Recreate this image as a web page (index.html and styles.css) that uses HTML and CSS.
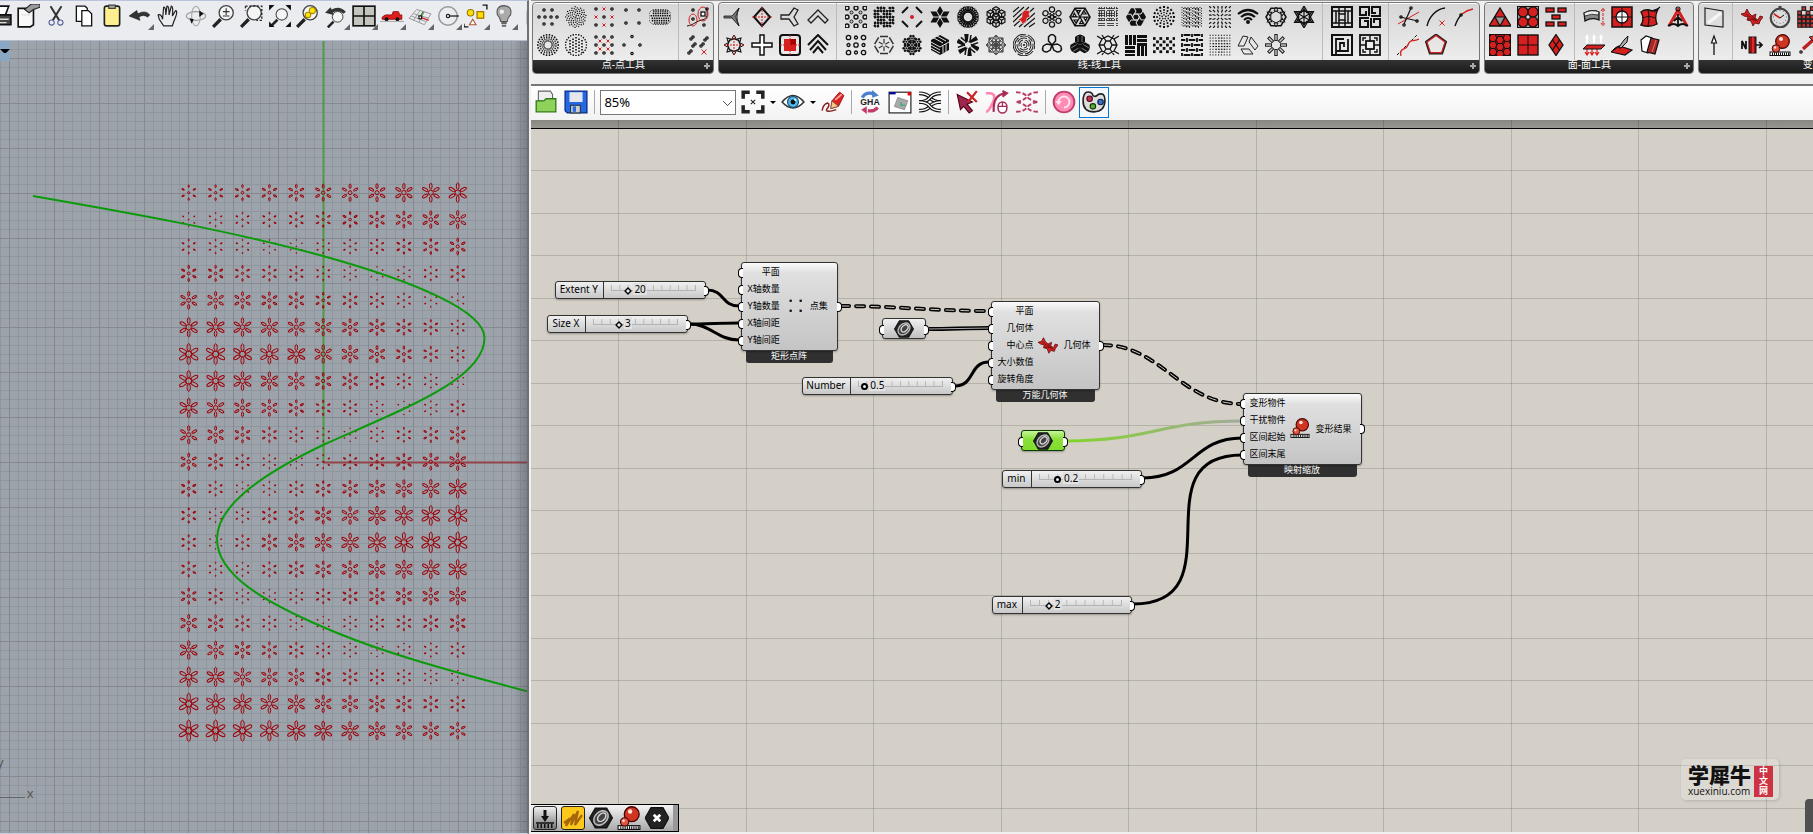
FILE: index.html
```html
<!DOCTYPE html>
<html lang="zh-CN">
  <head>
    <meta charset="UTF-8">
    <meta name="viewport" content="width=device-width, initial-scale=1.0">
    <title>Grasshopper</title>
    <link rel="stylesheet" href="styles.css">
  </head>
  <body>
    <div class="app">
      <section class="rhino">
        <div class="rhino-tools" data-icons="print props cut copy paste undo* pan orbit zoom zoom-window zoom-extents zoom-selected undo-view* four-view* car* cplane* circle-tool* shapes* bulb* box"></div>
        <div class="viewport">
          <button class="view-menu" aria-label="View menu"></button>
          <svg class="scene" id="scene" aria-hidden="true">
            <g id="grid"></g>
            <path class="axis-y" d="M323.500 0V421"/>
            <path class="axis-x" d="M323 421.500H530"/>
            <g id="flowers"></g>
            <path class="curve" id="curve" d="M33 155C130 172 227 189 323 215C420 242 484.500 271 484.500 297C484.500 339 400 369 323 404C250 439 217 469 217 498C217 534 265 561 323 586C380 611 450 630 530 651"/>
            <path class="ucs" d="M0 756.500H25"/>
            <text class="ucs-label" x="27" y="757">x</text>
            <text class="ucs-label" x="-3" y="726">y</text>
          </svg>
        </div>
      </section>

      <section class="gh">
        <div class="ribbon">
          <div class="group">
            <div class="panels">
              <div class="cells" data-icons="stagger sunflower grid-red corners pill rings rings-even cross-red diamond-pts"></div>
              <div class="cells" data-icons="curve-pts pair-pts"></div>
            </div>
            <h2>点-点工具</h2>
          </div>
          <div class="group">
            <div class="panels">
              <div class="cells" data-icons="tri-arrow diamond tri-y chevron hex-sun plus square-red chevrons"></div>
              <div class="cells" data-icons="circles noise dashes-dot star6 woven hex-cluster splash hex-flower hex-tri weave swirl dots-ring rain rays wifi hex-star star-pattern circles-mix hex-spokes dots-hex iso blades mandala maze-ring petals petals-fill lattice basket diag-dots woven-dots dot-grid quads burst"></div>
              <div class="cells" data-icons="window-a meander meander-b window-b"></div>
              <div class="cells" data-icons="lines-pt arc-x arc-pt curve-cross pentagon"></div>
            </div>
            <h2>线-线工具</h2>
          </div>
          <div class="group">
            <div class="panels">
              <div class="cells" data-icons="tri-red circles-red bricks hexes-red squares-red diamonds-red"></div>
              <div class="cells" data-icons="cylinder target patch compass updown plane slabs"></div>
            </div>
            <h2>面-面工具</h2>
          </div>
          <div class="group wide">
            <div class="panels">
              <div class="cells" data-icons="quad arrow-up"></div>
              <div class="cells" data-icons="bird clock checker north balls arrow-red"></div>
            </div>
            <h2>变-变动工具</h2>
          </div>
        </div>

        <div class="toolbar">
          <button class="tb" aria-label="Open" data-icon="open"></button>
          <button class="tb" aria-label="Save" data-icon="save"></button>
          <span class="sep"></span>
          <select class="zoom" aria-label="Zoom"><option>85%</option></select>
          <button class="tb" aria-label="Zoom extents" data-icon="fit"></button>
          <span class="drop"></span>
          <button class="tb" aria-label="Preview" data-icon="eye"></button>
          <span class="drop"></span>
          <button class="tb" aria-label="Sketch" data-icon="crayon"></button>
          <span class="sep"></span>
          <button class="tb" aria-label="GHA" data-icon="gha"></button>
          <button class="tb" aria-label="Window" data-icon="window"></button>
          <button class="tb" aria-label="Wires" data-icon="wires"></button>
          <span class="sep"></span>
          <button class="tb" aria-label="Disable pick" data-icon="pick"></button>
          <button class="tb" aria-label="Mouse wire" data-icon="mouse"></button>
          <button class="tb" aria-label="Dashed wires" data-icon="wires-dash"></button>
          <span class="sep"></span>
          <button class="tb" aria-label="Recompute" data-icon="refresh"></button>
          <button class="tb active" aria-label="Palette" data-icon="palette"></button>
        </div>

        <div class="canvas">
          <svg class="wires" id="wires" aria-hidden="true">
            <defs>
              <linearGradient id="green-wire" gradientUnits="userSpaceOnUse" x1="536" y1="0" x2="710" y2="0">
                <stop offset="0" stop-color="#82d42c"/>
                <stop offset="1" stop-color="#a3aa9a"/>
              </linearGradient>
            </defs>
            <g id="canvas-grid"></g>
            <path class="wire" d="M176 170C194 170 190 186 208 186"/>
            <path class="wire" d="M158 204C176 204 190 203 208 203"/>
            <path class="wire" d="M158 204C180 204 186 220 208 220"/>
            <path class="wire" d="M424 266C444 266 438 242 458 242"/>
            <path class="wire" d="M612 358C662 358 662 318 711 318"/>
            <path class="wire" d="M602 484C708 484 606 335 711 335"/>
            <path class="wire green" d="M536 321C618 321 630 301 711 301"/>
            <path class="wire list" d="M398 209C418 209 438 208 458 208"/>
            <path class="wire list-core" d="M398 209C418 209 438 208 458 208"/>
            <path class="wire tree" d="M310 186C360 186 408 191 458 191"/>
            <path class="wire tree-core" d="M310 186C360 186 408 191 458 191"/>
            <path class="wire tree" d="M572 225C630 225 650 284 711 284"/>
            <path class="wire tree-core" d="M572 225C630 225 650 284 711 284"/>
          </svg>

          <div class="slider extent-y">
            <label for="extent-y">Extent Y</label>
            <div class="track" style="--at: 0.2"><input id="extent-y" type="range" min="0" max="100" value="20"><output>20</output></div>
          </div>
          <div class="slider size-x">
            <label for="size-x">Size X</label>
            <div class="track" style="--at: 0.3"><input id="size-x" type="range" min="0" max="10" value="3"><output>3</output></div>
          </div>
          <div class="slider number float">
            <label for="number">Number</label>
            <div class="track" style="--at: 0.07"><input id="number" type="range" min="0" max="7" step="0.1" value="0.5"><output>0.5</output></div>
          </div>
          <div class="slider min float">
            <label for="min">min</label>
            <div class="track" style="--at: 0.2"><input id="min" type="range" min="0" max="1" step="0.1" value="0.2"><output>0.2</output></div>
          </div>
          <div class="slider max">
            <label for="max">max</label>
            <div class="track" style="--at: 0.2"><input id="max" type="range" min="0" max="10" value="2"><output>2</output></div>
          </div>

          <div class="param geo"><span data-icon="nut"></span></div>
          <div class="param crv selected"><span data-icon="nut"></span></div>

          <div class="node grid-node">
            <div class="node-body">
              <ul class="inputs"><li>平面</li><li>X轴数量</li><li>Y轴数量</li><li>X轴间距</li><li>Y轴间距</li></ul>
              <span class="node-icon" data-icon="corners-sq"></span>
              <ul class="outputs"><li>点集</li></ul>
            </div>
            <div class="node-name">矩形点阵</div>
          </div>
          <div class="node geo-node">
            <div class="node-body">
              <ul class="inputs"><li>平面</li><li>几何体</li><li>中心点</li><li>大小数值</li><li>旋转角度</li></ul>
              <span class="node-icon" data-icon="bird"></span>
              <ul class="outputs"><li>几何体</li></ul>
            </div>
            <div class="node-name">万能几何体</div>
          </div>
          <div class="node morph-node">
            <div class="node-body">
              <ul class="inputs"><li>变形物件</li><li>干扰物件</li><li>区间起始</li><li>区间末尾</li></ul>
              <span class="node-icon" data-icon="balls"></span>
              <ul class="outputs"><li>变形结果</li></ul>
            </div>
            <div class="node-name">映射缩放</div>
          </div>

          <div class="recent">
            <button class="framed" aria-label="Dock" data-icon="dock"></button>
            <button class="framed yellow" aria-label="Scribble" data-icon="scribble"></button>
            <button aria-label="Curve" data-icon="nut"></button>
            <button aria-label="Scale" data-icon="balls"></button>
            <button aria-label="Close" data-icon="close"></button>
          </div>

          <a class="brand" href="#">
            <span class="brand-name"><b>学犀牛</b><span>xuexiniu.com</span></span>
            <span class="brand-tag">中<br>文<br>网</span>
          </a>
          <span class="side-tab"></span>
        </div>
      </section>
    </div>
    <script src="icons.js"></script>
    <script src="app.js"></script>
  </body>
</html>
```
FILE: styles.css
```css
* {
  box-sizing: border-box;
  margin: 0;
  padding: 0;
}

body {
  font-family: "Noto Sans", "Noto Sans CJK SC", sans-serif;
  background-color: #f0f0f0;
  overflow: hidden;
}

button {
  border: none;
  background: none;
  font: inherit;
}

svg {
  display: block;
}

.app {
  display: flex;
  height: 100vh;
}

/* Rhino side */
.rhino {
  flex: 0 0 29.2%;
  display: flex;
  flex-direction: column;
  min-width: 0;
  border-top: 1px solid #b9c3dc;
  border-right: 2px solid #6f7073;
  border-bottom: 1px solid #c6cedd;
  background-color: #ebecf0;
  overflow: hidden;
}

.rhino-tools {
  flex: 0 0 40px;
  display: flex;
  padding-top: 1px;
  margin-left: -14px;
  border-bottom: 1px solid #b4bccb;
}

.rhino-tools button {
  flex: 0 0 28px;
  height: 28px;
  padding: 2px;
  position: relative;
}

.rhino-tools svg {
  width: 24px;
  height: 24px;
}

.rhino-tools .more::after {
  content: "";
  position: absolute;
  right: 0;
  bottom: 0;
  border-left: 6px solid transparent;
  border-bottom: 6px solid #666;
}

.viewport {
  flex: 1;
  position: relative;
  background-color: #9da3aa;
  overflow: hidden;
}

.viewport::after {
  content: "";
  position: absolute;
  top: 0;
  right: 0;
  bottom: 0;
  width: 14px;
  background: linear-gradient(to right, transparent, rgba(60, 65, 75, 0.35));
}

.scene {
  width: 100%;
  height: 100%;
}

.view-menu {
  position: absolute;
  left: 0;
  top: 0;
  width: 10px;
  height: 20px;
  background-color: #8ca7c3;
}

.view-menu::after {
  content: "";
  display: block;
  border: 4px solid transparent;
  border-top-color: #000;
  border-bottom: none;
}

.minor {
  stroke: #90969e;
}

.major {
  stroke: #858992;
}

.axis-y {
  stroke: #4d9a4d;
  stroke-width: 2;
}

.axis-x {
  stroke: #96444a;
  stroke-width: 2;
}

.curve {
  fill: none;
  stroke: #0b9a0b;
  stroke-width: 2;
}

#flowers {
  fill: none;
  stroke: #9c0008;
  stroke-width: 1;
}

.ucs {
  stroke: #666;
}

.ucs-label {
  font: 13px "Liberation Sans", sans-serif;
  fill: #555;
}

/* Grasshopper side */
.gh {
  flex: 1;
  min-width: 0;
  display: flex;
  flex-direction: column;
  padding: 0 0 2px 2px;
  overflow: hidden;
}

.ribbon {
  display: flex;
  gap: 4px;
  padding: 1px 0 0 1px;
  border-top: 1px solid #999;
  height: 74px;
}

.group {
  flex: none;
  border: 1px solid #777;
  border-radius: 4px;
  background: linear-gradient(#d6d6d6, #ededed 58px);
  box-shadow: inset 0 1px #fff;
  overflow: hidden;
}

.wide {
  width: 262px;
}

.panels {
  display: flex;
  height: 57px;
  padding: 0 1px;
}

.cells {
  display: grid;
  grid-auto-columns: 28px;
  grid-template-rows: 28px 28px;
}

.cells + .cells {
  margin-left: 4px;
  padding-left: 5px;
  border-left: 1px solid #bbb;
}

.cells button {
  padding: 3px;
}

.cells svg {
  width: 22px;
  height: 22px;
}

.group h2 {
  height: 15px;
  position: relative;
  font-size: 10px;
  line-height: 8px;
  font-weight: 400;
  text-align: center;
  color: #fff;
  background: linear-gradient(#333, #161616);
}

.group h2::after {
  content: "";
  position: absolute;
  right: 3px;
  top: 3px;
  width: 6px;
  height: 6px;
  background: linear-gradient(#aaa, #aaa) 2px 0 / 2px 6px no-repeat, linear-gradient(#aaa, #aaa) 0 2px / 6px 2px no-repeat;
}

.toolbar {
  display: flex;
  align-items: center;
  height: 36px;
  margin-top: 10px;
  padding-bottom: 2px;
  border-top: 2px solid #777;
  background: linear-gradient(#fff, #f2f2f2);
}

.tb {
  flex: none;
  width: 30px;
  height: 31px;
  padding: 3px;
}

.tb svg {
  width: 24px;
  height: 24px;
}

.active {
  border: 1px solid #0078d7;
  padding: 2px;
  background-color: #f4f8fc;
}

.sep {
  width: 1px;
  height: 24px;
  margin: 0 3px;
  background-color: #aaa;
}

.zoom {
  width: 136px;
  height: 25px;
  margin: 0 2px;
  padding-left: 3px;
  font-family: inherit;
  font-size: 13px;
  color: #000;
  border: 1px solid #777;
  border-radius: 0;
  appearance: none;
  background-color: #fff;
  background-image: linear-gradient(-45deg, transparent 42%, #555 42% 58%, transparent 58%), linear-gradient(45deg, transparent 42%, #555 42% 58%, transparent 58%);
  background-position: 126px 10px, 122px 10px;
  background-size: 5px 5px;
  background-repeat: no-repeat;
}

.drop {
  width: 6px;
  margin: 0 2px;
  border: 3px solid transparent;
  border-top-color: #000;
  border-bottom: none;
}

/* Canvas */
.canvas {
  flex: 1;
  position: relative;
  background: linear-gradient(#888680, #999791 8px, #000 8px, #000 9px, #d4d0c8 9px);
  overflow: hidden;
}

.wires {
  width: 100%;
  height: 100%;
}

.canvas-line {
  stroke: rgba(0, 10, 0, 0.15);
}

.wire {
  fill: none;
  stroke: #000;
  stroke-width: 3;
  stroke-linecap: round;
}

.green {
  stroke: url(#green-wire);
}

.list {
  stroke-width: 4;
  stroke-linecap: butt;
}

.list-core {
  stroke: #aaa;
  stroke-width: 1;
}

.tree {
  stroke-width: 4;
  stroke-dasharray: 8 7;
}

.tree-core {
  stroke: #d4d0c8;
  stroke-width: 1;
  stroke-dasharray: 8 7;
}

.slider,
.param,
.node,
.recent,
.brand,
.side-tab {
  position: absolute;
}

.slider {
  display: flex;
  height: 18px;
  font-size: 10px;
  line-height: 14px;
  border: 1px solid #333;
  border-radius: 3px;
  background: linear-gradient(#f0f0f0, #c8c8c8);
  box-shadow: 0 1px 2px rgba(0, 0, 0, 0.3);
}

.slider label {
  flex: none;
  padding-right: 2px;
  text-align: center;
  border-right: 1px solid #333;
}

.track {
  flex: 1;
  position: relative;
}

.track::before {
  content: "";
  position: absolute;
  left: 7px;
  right: 9px;
  top: 3px;
  height: 5px;
  border-right: 1px solid #b4b4b4;
  border-bottom: 1px solid #b4b4b4;
  background: linear-gradient(to right, #b4b4b4 1px, transparent 1px) 0 0 / 10% 5px;
}

.track input {
  position: absolute;
  left: 3px;
  top: 4px;
  width: calc(100% - 8px);
  height: 9px;
  appearance: none;
  background: none;
}

.track input::-webkit-slider-thumb {
  appearance: none;
  width: 8px;
  height: 8px;
  background: #eee;
  border: 2px solid #000;
  transform: rotate(45deg) scale(0.7);
}

.float input::-webkit-slider-thumb {
  border-radius: 50%;
  transform: none;
  width: 7px;
  height: 7px;
}

.track output {
  position: absolute;
  left: calc(12px + (100% - 16px) * var(--at));
  top: 1px;
  height: 12px;
  padding: 0 1px;
  line-height: 12px;
  background-color: #e2e2e2;
}

.extent-y { left: 24px; top: 161px; width: 151px; }
.extent-y label { width: 48px; }
.size-x { left: 16px; top: 195px; width: 141px; }
.size-x label { width: 38px; }
.number { left: 271px; top: 257px; width: 151px; }
.number label { width: 48px; }
.min { left: 471px; top: 350px; width: 140px; }
.min label { width: 29px; }
.max { left: 461px; top: 476px; width: 140px; }
.max label { width: 30px; }

/* connection grips */
.slider::after,
.param::before,
.param::after,
.inputs li::before,
.outputs li::after {
  content: "";
  position: absolute;
  top: calc(50% - 4px);
  width: 4px;
  height: 8px;
  background-color: #fff;
  border: 1px solid #000;
}

.slider::after,
.param::after,
.outputs li::after {
  right: -4px;
  border-width: 1px 1px 1px 0;
  border-radius: 0 4px 4px 0;
}

.param::before,
.inputs li::before {
  left: -4px;
  border-width: 1px 0 1px 1px;
  border-radius: 4px 0 0 4px;
}

.param {
  display: flex;
  justify-content: center;
  width: 44px;
  height: 21px;
  border: 1px solid #333;
  border-radius: 3px;
  background: linear-gradient(#f0f0f0, #c0c0c0);
  box-shadow: 0 1px 2px rgba(0, 0, 0, 0.3);
}

.param svg {
  width: 20px;
  height: 20px;
}

.geo { left: 351px; top: 198px; }
.crv { left: 490px; top: 310px; }

.selected {
  border-color: #0b3a05;
  background: linear-gradient(#c8f59c, #8ae03a 8px, #80dc2c);
}

.node {
  font-size: 9px;
}

.node-body {
  display: flex;
  align-items: center;
  position: relative;
  padding-bottom: 2px;
  border: 1px solid #333;
  border-radius: 3px;
  background: linear-gradient(#fbfbfb, #e0e0e0 10px, #c4c4c4);
  box-shadow: 0 1px 2px rgba(0, 0, 0, 0.3);
}

.node ul {
  list-style: none;
}

.node li {
  position: relative;
  line-height: 17px;
  text-align: right;
  white-space: nowrap;
}

.inputs {
  padding-left: 5px;
}

.inputs li::before {
  left: -9px;
}

.outputs {
  flex: 1;
  padding-right: 10px;
}

.outputs li::after {
  right: -14px;
}

.node-icon {
  margin: 0 5px;
}

.node-icon svg {
  width: 20px;
  height: 20px;
}

.node-name {
  height: 12px;
  margin: 0 5px;
  padding-right: 2px;
  line-height: 10px;
  text-align: center;
  color: #fff;
  background-color: #303030;
  border-radius: 0 0 3px 3px;
}

.grid-node { left: 210px; top: 142px; width: 97px; }
.geo-node { left: 460px; top: 181px; width: 109px; }
.morph-node { left: 712px; top: 273px; width: 119px; }

.recent {
  left: 0;
  bottom: 0;
  display: flex;
  gap: 4px;
  height: 28px;
  padding: 1px 9px 1px 2px;
  border: 1px solid #000;
  border-left: none;
  background: linear-gradient(to left, #999 5px, transparent 5px), linear-gradient(#f4f4f4, #a8a8a8);
}

.recent button,
.recent svg {
  width: 24px;
  height: 24px;
}

.recent .framed {
  border: 1px solid #222;
  border-radius: 3px;
  background: linear-gradient(#f0f0f0, #777);
}

.recent .framed svg {
  width: 22px;
  height: 22px;
}

.recent .yellow {
  background: #fcc81c;
}

.brand {
  display: flex;
  gap: 3px;
  right: 34px;
  bottom: 32px;
  padding: 4px 6px 3px 7px;
  border-radius: 5px;
  color: #111;
  text-decoration: none;
  background-color: rgba(255, 255, 255, 0.2);
  box-shadow: 1px 1px 3px rgba(0, 0, 0, 0.15);
}

.brand-name {
  display: flex;
  flex-direction: column;
  font: 10px/12px "Open Sans", sans-serif;
}

.brand-name b {
  font: 900 21px/22px "Noto Sans CJK SC", sans-serif;
}

.brand-tag {
  align-self: flex-start;
  width: 19px;
  margin-top: 3px;
  padding-bottom: 1px;
  font-size: 9px;
  font-weight: 700;
  line-height: 10px;
  text-align: center;
  color: #fff;
  background-color: #ce3343;
}

.side-tab {
  right: 0;
  bottom: 0;
  width: 8px;
  height: 33px;
  border-radius: 4px 0 0 0;
  background-color: #505050;
}
```
FILE: icons.js
```js
// All icons are drawn around 0,0 in a 22 x 22 box
const RED = '#d62020';

const rot = (n, s, start = 0) => Array.from({ length: n }, (_, i) => `<g transform="rotate(${start + i * 360 / n})">${s}</g>`).join('');
const at = (x, y, s) => `<g transform="translate(${x} ${y})">${s}</g>`;
const line = (d, w = 1, c = '#111', more = '') => `<path d="${d}" fill="none" stroke="${c}" stroke-width="${w}" ${more}/>`;
const fill = (d, c = '#111', s = 'none', w = 1) => `<path d="${d}" fill="${c}" stroke="${s}" stroke-width="${w}"/>`;
const dot = (x, y, r = 1, c = '#111') => `<circle cx="${x}" cy="${y}" r="${r}" fill="${c}"/>`;
const ring = (x, y, r = 1, w = 1, c = '#111', f = 'none') => `<circle cx="${x}" cy="${y}" r="${r}" fill="${f}" stroke="${c}" stroke-width="${w}"/>`;
const ex = (x, y, r = 1.5, c = RED) => line(`M${x - r} ${y - r}L${x + r} ${y + r}M${x + r} ${y - r}L${x - r} ${y + r}`, 1, c);
const rect = (x, y, w, h, c = '#111', s = 'none', sw = 1) => `<rect x="${x}" y="${y}" width="${w}" height="${h}" fill="${c}" stroke="${s}" stroke-width="${sw}"/>`;
const poly = (n, r, start = -90) => 'M' + Array.from({ length: n }, (_, i) => {
  const a = (start + i * 360 / n) * Math.PI / 180;
  return (r * Math.cos(a)).toFixed(2) + ' ' + (r * Math.sin(a)).toFixed(2);
}).join('L') + 'Z';
const cells = (step, half, fn) => {
  let s = '';
  for (let y = -half; y <= half; y += step) for (let x = -half; x <= half; x += step) s += fn(x, y, Math.round((x + half) / step), Math.round((y + half) / step));
  return s;
};
const sq = (x, y) => ring(x, y, 1.2, 1.2);
const hexSpots = r => [[0, 0]].concat(Array.from({ length: 6 }, (_, i) => [r * Math.cos(i * Math.PI / 3 + Math.PI / 6), r * Math.sin(i * Math.PI / 3 + Math.PI / 6)]));
const cross = (r = 10) => line(`M${-r} 0H${r}M0 ${-r}V${r}`, 1, RED, 'stroke-dasharray="2 1"');
const lens = line('M-3 3L-10 10', 3, '#222') + ring(2, -3, 6.5, 1.2, '#444', '#f4f4f4');

function sunflower() {
  let s = '';
  for (let i = 0; i < 75; i++) {
    const r = 1.22 * Math.sqrt(i), a = i * 2.4;
    s += dot((r * Math.cos(a)).toFixed(1), (r * Math.sin(a)).toFixed(1), 0.7);
  }
  return s;
}

const ICONS = {
  stagger: [[-4, -7], [4, -7], [-9, 0], [-3, 0], [3, 0], [9, 0], [-4, 7], [4, 7]].map(p => sq(...p)).join(''),
  sunflower: sunflower(),
  'grid-red': cells(8, 8, (x, y, i, j) => (i + j) % 2 ? ex(x, y) : sq(x, y)),
  corners: [[-6, -7], [7, -7], [-6, 6], [7, 6]].map(p => sq(...p)).join(''),
  'corners-sq': [[-5, -6], [6, -6], [-5, 5], [6, 5]].map(p => rect(p[0] - 1, p[1] - 1, 2.5, 2.5)).join(''),
  pill: [-6, -3.6, -1.2, 1.2, 3.6, 6].map((y, j) => line(`M${-10 + Math.abs(y) * .5 + j % 2} ${y}H${11 - Math.abs(y) * .5}`, 1.6, '#111', 'stroke-dasharray="1.5 .8"')).join('') + `<rect x="-11" y="-7.5" width="22" height="15" rx="6" fill="none" stroke="#222" stroke-width=".8" stroke-dasharray="1.5 1"/>`,
  rings: rot(22, dot(10.2, 0, .9)) + rot(20, dot(8, 0, .8), 8) + rot(18, dot(6.1, 0, .7)) + rot(16, ring(4.2, 0, .5, .7), 8),
  'rings-even': rot(24, dot(10.5, 0, .8)) + [-6, -3, 0, 3, 6].map(x => line(`M${x} ${-8 + Math.abs(x) * .5}V8`, 1.6, '#111', 'stroke-dasharray="1.5 1.5"')).join(''),
  'cross-red': cells(8, 8, (x, y) => sq(x, y)) + ex(-4, -4) + ex(4, -4) + ex(-4, 4) + ex(4, 4),
  'diamond-pts': sq(0, -8.5) + sq(-8, 0) + sq(8, 0) + sq(0, 8.5),
  'curve-pts': line('M-11 9C-4 8-2 4 4 3S10-4 8-9') + `<ellipse cx="-5" cy="3" rx="4" ry="6" fill="none" stroke="${RED}"/><ellipse cx="5" cy="-3" rx="5" ry="7" fill="none" stroke="${RED}"/>` + sq(-5, -7) + sq(-5, 2) + sq(9, -8) + sq(6, 8) + rect(3, -5, 4, 4, '#fff', '#111', 1.3),
  'pair-pts': [[-6, -7], [-4, 0], [8, -6], [4, 0], [-8, 7]].map(p => sq(p[0] + 1, p[1] - 1) + sq(p[0] - 1, p[1] + 1)).join('') + ex(6, 7, 2.5),

  'tri-arrow': fill('M-10-1H-2L5-9L2-1V1L5 9L-2 1H-10Z', '#777', '#111', .8) + line('M5-9Q1 0 5 9', .8),
  diamond: fill('M0-9L8 0L0 9L-8 0Z', 'none', '#111', 2) + cross(),
  'tri-y': fill('M-9-2H-1L4-9L8-7L4 0L8 7L4 9L-1 2H-9Z', 'none', '#222', 1.3),
  chevron: fill('M0-7L10 3L7 6L0-1L-7 6L-10 3Z', 'none', '#222', 1.3),
  'hex-sun': line(poly(8, 6.5), 1.5) + rot(8, line('M-2-6.5L0-10L2-6.5', 1)) + cross(),
  plus: fill('M-2-10H2V-2H10V2H2V10H-2V2H-10V-2H-2Z', '#fff', '#111', 1.5),
  'square-red': `<rect x="-10" y="-10" width="20" height="20" rx="3" fill="none" stroke="#111" stroke-width="2"/>` + rect(-6, -6, 12, 12, RED) + rect(0, -6, 6, 6, '#a00') + cross(),
  chevrons: line('M-10 0L0-10L10 0M-8 5L0-4L8 5M-5 8L0 2L5 8', 2),
  circles: cells(9, 9, (x, y) => ring(x, y, 2, 1.4)) + ring(-4.5, -4.5, 1.5) + ring(4.5, -4.5, 1.5) + ring(-4.5, 4.5, 1.5) + ring(4.5, 4.5, 1.5),
  noise: cells(3, 9, (x, y, i, j) => (i * 5 + j * 3 + i * j) % 4 ? `<g transform="translate(${x} ${y}) rotate(${(i * 37 + j * 53) % 90})">${rect(-1.4, -1.1, 2.8, 2.2)}</g>` : ''),
  'dashes-dot': rot(4, line('M-10-4L-4-10', 2)) + dot(0, 0, 2, RED),
  star6: rot(6, fill('M0-1L-3-6L0-11L3-6Z')),
  woven: rot(24, line('M5-1L11 1M5 1L11-1', 1)) + ring(0, 0, 5, 1.5) + ring(0, 0, 8, 1),
  'hex-cluster': hexSpots(6.5).map(p => at(p[0], p[1], line(poly(6, 3.8), 1.2) + line('M0 0V3.500M0 0L3-2M0 0L-3-2', 1.2))).join(''),
  splash: line('M-11-5L-5-10M-11 0L0-10M-11 5L5-10M-10 9L10-9M-5 10L11-4M0 10L11 1M5 10L11 6', 1.2) + fill('M1-7L6-6L5-3L6 0L3 1L2 5L-2 7L-3 4L-6 3L-2 0L-2-4Z', RED, '#ddd', .6),
  'hex-flower': rot(6, ring(0, -7.5, 2.6, 1.2) + line('M-2-4L0-1.500L2-4', 1)) + ring(0, 0, 2, 1),
  'hex-tri': line(poly(6, 10, 0), 1.5) + rot(6, line('M0 0L5-8.500M2-3L6-3L4-6Z', 1.2)),
  weave: [-7.5, -2.5, 2.5, 7.5].map(v => line(`M-10 ${v - 1}H10M-10 ${v + 1}H10`, .8, '#222', 'stroke-dasharray="7 2"') + line(`M${v - 1}-10V10M${v + 1}-10V10`, .8, '#222', 'stroke-dasharray="2 2 6"')).join(''),
  swirl: fill(poly(6, 10, 0)) + rot(6, line('M-1-3L5-3L8-8', 1, '#ddd')) + line(poly(6, 3.5, 0), 1, '#ddd'),
  'dots-ring': rot(16, rect(-1, -11, 2, 2)) + rot(12, dot(0, -7, 1)) + rot(10, dot(0, -4.5, .8)) + rot(5, dot(0, -2, .8)),
  rain: [-10, -7, -4, -1, 2, 5, 8].map((x, i) => line(`M${x}-10V10M${x + 1.5}-9V11`, .9, '#111', `stroke-dasharray="${1 + i % 3} 1.500"`)).join(''),
  rays: cells(4, 10, (x, y) => x || y ? `<g transform="translate(${x} ${y}) rotate(${Math.atan2(y, x) * 57.3})">${rect(-1.6, -.6, 3.2, 1.2)}</g>` : ''),
  wifi: line('M-10-3Q0-11 10-3', 2.2) + line('M-7 0Q0-6 7 0', 2.2) + line('M-4 3Q0-1 4 3', 2.2) + dot(0, 5, 2),
  'hex-star': line(poly(6, 10, 0), 1.5) + line(poly(6, 6)) + rot(6, fill('M-2-6L0-10L2-6Z', '#ddd', '#111')),
  'star-pattern': line(poly(3, 11), 1.2) + line(poly(3, 11, 90), 1.2) + rot(6, line('M0 0V-10M-3-4L0-8L3-4', 1.2)),
  'circles-mix': cells(7.5, 7.5, (x, y, i, j) => ring(x, y, (i + j) % 2 ? 1.5 : 2.2, 1.3)),
  'hex-spokes': rot(6, line('M-4-8.500H4', 1.5, '#333') + line('M0-1.500V-6', 1.2, '#333')),
  'dots-hex': hexSpots(6.5).map(p => at(p[0], p[1], rot(6, dot(2.7, 0, 1.3)) + dot(0, 0, 1))).join(''),
  iso: fill('M9-5V5L0 10L-9 5V-5L0-10Z') + line('M-9-3L0 2L9-3M-9 0L0 5M-9 3L0 8M-6-7L3-2M-3-9L6-4M3 1V8M6-1V7', 1, '#ddd'),
  blades: rot(6, fill('M0-3L8-9L10-5L3-2Z')) + rot(6, line('M2-4L3-10', 1.5)),
  mandala: ring(0, 0, 4, .9, '#444') + rot(8, ring(0, -5, 3.5, .9, '#444') + line('M0 0V-10M-2-8L0-10L2-8', .9, '#444')),
  'maze-ring': [3, 5, 7, 9, 10.8].map((r, i) => `<circle r="${r}" fill="none" stroke="#222" stroke-width="1" stroke-dasharray="${r * 1.6} 2" transform="rotate(${i * 47})"/>`).join('') + dot(0, 0, 1),
  petals: rot(3, fill('M0 0L3.500-4V-8Q0-13-3.500-8V-4Z', 'none', '#111', 1.5)),
  'petals-fill': rot(3, fill('M0 0L5-3V-8Q0-13-5-8V-3Z') + line('M-2-9V-3M2-9V-3', .6, '#bbb')),
  lattice: line('M-11-9L-6-6L-9 0L-6 6L-11 9M11-9L6-6L9 0L6 6L11 9M-6-6L0-9L6-6M-6 6L0 9L6 6M-4 0L-2-4H2L4 0L2 4H-2ZM-9 0H-4M4 0H9M-2-4L-6-10M2-4L6-10M-2 4L-6 10M2 4L6 10', 1.3),
  basket: [[-11, -10, 0], [1, -10, 1], [-11, 1, 1], [1, 1, 0]].map(p => [0, 4, 8].map(k => p[2] ? rect(p[0], p[1] + k, 10, 3) : rect(p[0] + k, p[1], 3, 10)).join('')).join(''),
  'diag-dots': cells(3.3, 9.9, (x, y, i, j) => (i + j) % 2 && Math.abs(y) < 8 ? rect(x - 1.3, y - 1.3, 2.8, 2.8) : ''),
  'woven-dots': cells(5, 10, (x, y, i, j) => (i + j) % 2 ? line(`M${x - 2.5} ${y}H${x + 2.5}`, 2.2, '#111', 'stroke-linecap="round"') : line(`M${x} ${y - 2}V${y + 2}`, 1.8)),
  'dot-grid': cells(2.8, 9.8, (x, y) => rect(x - .5, y - .5, Math.abs(x) + Math.abs(y) < 9 ? 1.6 : 1, 1.2)),
  quads: fill('M-10 1L-5-9L0-8L-4 1Z', 'none', '#222') + fill('M3-8L10 1L7 5L1-3Z', 'none', '#222') + fill('M-7 4H1L5 9H-4Z', 'none', '#222'),
  burst: rot(8, rect(-1.2, -10.5, 2.4, 6, '#ccc', '#222', 1)),
  'window-a': rect(-10, -10, 20, 20, 'none', '#111', 2) + rect(-6, -6, 12, 12, 'none', '#111', 1.5) + rect(-3, -3, 6, 6, 'none', '#111', 1.5) + line('M-10-6H-6M-10 6H-6M6-6H10M6 6H10M-3-10V-3M3-10V-3M-3 3V10M3 3V10', 1.5),
  meander: rot(4, line('M-1-1V-10H-10V-2H-4V-6', 2)),
  'meander-b': rect(-10, -10, 20, 20, 'none', '#111', 2) + line('M-6 10V-6H2M-2 6V-2H2V2M-6 6H6V-6', 1.8),
  'window-b': rect(-10, -10, 20, 20, 'none', '#111', 1.8) + rect(-4, -4, 8, 8, '#eee', '#111', 1.8) + line('M0-10V-4M0 4V10M-10 0H-4M4 0H10M-7-4V-7H-4M4-7H7V-4M-7 4V7H-4M4 7H7V4', 1.4),
  'lines-pt': line('M-10 7L11-5', 1, RED) + line('M3-9L-4 7M-8 0L10 4', 1.2) + sq(3, -9) + sq(-4, 8) + sq(9, 4) + sq(-7, 0),
  'arc-x': line('M-9 9C-7 0 0-8 9-9', 1.4) + ex(6, 6, 2.5),
  'arc-pt': line('M-9 9C-7 3-5 0-2-3', 1.4) + line('M-2-3Q3-7 9-8', 1.4, RED) + sq(-3, -2),
  'curve-cross': line('M-11 10L10-11', 1, '#111', 'stroke-dasharray="3 2"') + line('M-7 11C-9 2-2 6 0 0S4-3 11-6', 1.3, RED),
  pentagon: line(poly(5, 10.5), 2, '#222') + line(poly(5, 9.5), 1.2, RED),

  'tri-red': fill('M0-9L11 9H-11Z', RED, '#111', 1.4) + fill('M-5 0H5L0 9Z', '#999', '#111', 1.2),
  'circles-red': rect(-10.5, -10.5, 21, 21, '#999', '#111', 1) + [[-5, -5], [5, -5], [-5, 5], [5, 5]].map(p => ring(p[0], p[1], 5, 1.2, '#111', RED)).join('') + ring(0, 0, 2.2, 1, '#111', '#ddd'),
  bricks: [[-10, -9], [2, -9], [-4, -2], [-10, 5], [2, 5]].map(p => rect(p[0], p[1], 8, 4, RED, '#111', 1.3)).join(''),
  'hexes-red': rect(-10.5, -10.5, 21, 21, '#9c1111', '#111') + cells(7, 7, (x, y, i) => at(x, y + (i % 2 ? 2 : 0), fill(poly(6, 4, 0), RED, '#111', 1))),
  'squares-red': rect(-10, -10, 20, 20, RED, '#111', 1.4) + line('M0-10V10M-10 0H10'),
  'diamonds-red': fill('M0-10.500L7 0L0 10.500L-7 0Z', RED, '#111', 1.3) + line('M-3.500-5L3.500 5M3.500-5L-3.500 5', 1.3),
  cylinder: fill('M-10-4Q-2-8 5-5V3Q-2 0-9 4Z', '#888', '#111', 1.3) + fill('M-10-4Q-2-8 5-5L4-2Q-2-4-9-1Z', '#eee', '#222', .8) + line('M9-8V8M7-6L9-9L11-6M7 6L9 9L11 6', 1, RED, 'stroke-dasharray="3 1"'),
  target: rect(-10, -10, 20, 20, RED, '#111', 1.5) + ring(0, 0, 6, 1.3, '#111', '#fff') + line('M0-10V10M-10 0H10', 1),
  patch: fill('M-9-5Q-4-9 2-6L8-8Q4 0 7 7Q0 11-9 8Q-5 2-9-5Z', RED, '#111', 1.4) + line('M-8 1Q0-2 5 1M-2-7Q0 0-2 9M4-5L10-10', 1.2),
  compass: line('M-9 9L0-7L9 9', 3, RED) + line('M0-3V9M-4 4L0 0L4 4M-10 9Q-4 5 0 9Q4 5 10 9', 1.8) + ring(0, -8, 2, 1.2),
  updown: line('M-7-2V-8M0-2V-8M7-2V-8', 2, '#fff') + fill('M-9-7L-7-11L-5-7ZM-2-7L0-11L2-7ZM5-7L7-11L9-7Z', '#fff') + line('M-7 3V9M-2 3V9M3 3V9M-9 7L-7 10L-5 7M-4 7L-2 10L0 7M1 7L3 10L5 7', 1.2, RED) + fill('M-7 0H11L7 4H-11Z', RED, '#111', 1),
  plane: fill('M-11 7L-3 1L10 5L3 10Z', RED, '#111', 1.2) + fill('M-3 2L2-5L6-9L5-3L-1 3Z', '#aaa', '#111', 1) + line('M-9 5Q-4-1-2 4', 1),
  slabs: fill('M-9-5L-4-9L2-7L-2 8L-8 6Z', '#fff', '#111', 1.2) + fill('M1-7L9-5L5 9L-3 7Z', '#a82828', '#111', 1.2) + line('M6-5L2 7', 1, '#e66'),
  quad: fill('M-9-9L9-6V10L-9 8Z', '#ddd', '#222', 1.2) + line('M-6 6L7-4', 3, '#f6f6f6'),
  'arrow-up': line('M0 10V-3', 1.3) + fill('M0-9L2.500-2H-2.500Z', '#fff', '#111', 1.2),
  bird: fill('M-11-3L-7-4L-5-8L-3-4L0-1L4-3L3 1L6 3L8-1L11 0L8 4L7 7L3 6L1 9L-1 4L-5 3L-4 0L-8-1Z', RED, '#611', .9) + line('M-6-3L4 4M0-1L6 5M-4 2L3 3', .9, '#611'),
  clock: ring(0, 1, 9.3, 2.2, '#444', '#ddd') + rect(-1.5, -11, 3, 2, '#444') + line('M0 1L-6-3', 1.8, RED) + line('M0 1L4-2', 1) + rot(12, line('M0-6V-7', 1, '#777')),
  checker: cells(4.2, 8.4, (x, y, i, j) => j > 1 || (i + j) % 2 ? rect(x - 1.8, y - 1.8, 3.6, 3.6, '#c33', '#222', 1.2) : ''),
  north: line('M-10 4V-4L-6 4V-4', 1.8) + rect(-3, -8, 7, 16, '#911', '#111', 1) + line('M1-8V8', 1.2, '#f44') + line('M4 0H9M7-3L10 0L7 3', 1.6),
  balls: rect(-10, 7, 20, 3.5, '#fff', '#111', 1) + line('M-8 9H10', 3, '#111', 'stroke-dasharray="1 1"') + ring(2.5, -3.5, 6.8, 1.2, '#400', '#cf3522') + ring(-4, 3.5, 3.8, 1, '#400', '#e25540') + dot(1, -6, 2, '#ffe6dd') + dot(-5, 2.5, 1.2, '#ffe6dd'),
  'arrow-red': sq(-7, 7) + line('M-5 4L5-5', 3.5, '#b22') + fill('M1-8L10-10L8-1Z', '#d33', '#111', .8),

  print: fill('M-6-9H8L5-1H-8Z', '#fff', '#111', 1.5) + fill('M-10-1H10V8H-10Z', '#444', '#111', 1.5) + line('M-8 3H8M-8 6H6', 1.2, '#ddd'),
  props: fill('M-9-7H5V8L2 10H-9Z', '#f8f8f8', '#111', 1.5) + fill('M-3-6L3-11H11V-8L5-6L1-3Z', '#999', '#222', 1) + line('M-6-1H2', 1, '#ddd'),
  cut: line('M-5-9L3 4M5-9L-3 4', 1.8, '#333') + ring(-4, 6, 2.4, 1, '#57619a') + ring(4, 6, 2.4, 1, '#57619a'),
  copy: fill('M-7-9H1L3-7V5H-7Z', '#fff', '#111', 1.2) + fill('M-2-5H4L7-2V9H-2Z', '#fff', '#111', 1.2),
  paste: `<rect x="-7" y="-9" width="14" height="18" rx="2" fill="#fdef8e" stroke="#222" stroke-width="1.5"/>` + rect(-3, -10, 6, 3, '#aaa', '#333'),
  undo: fill('M-10 0L-3-5L-2-2Q5-6 9-1L7 1Q3-2-1 1L0 4Z', '#333', '#111', .5),
  pan: line('M-9-1Q-6-2-5 3L-4-8Q-2-9-2-1L-1-9Q1-10 1-1L3-9Q5-9 4 0L7-5Q9-5 7 1L5 6L4 9H-4L-8 3Z', 1.1, '#222'),
  orbit: `<ellipse rx="9" ry="4" fill="none" stroke="#999"/><ellipse rx="4" ry="9" fill="none" stroke="#aaa"/>` + fill('M-6 2L-2 3L-4 7ZM3-5L7-2L3 1Z'),
  zoom: lens + line('M-1-4H5M2-7V-1M-1 0H5', 1, '#333'),
  'zoom-window': lens + line('M-6-9H9V4H4M-6-9V-5', 1.2, '#222', 'stroke-dasharray="2 1.500"'),
  'zoom-extents': at(0, 1, `<g transform="scale(.8)">${lens}</g>`) + rot(4, fill('M-10-10H-5L-10-5Z')),
  'zoom-selected': lens + ring(0, -1, 2.5, 1, '#aa8800', '#ffe600') + ring(4, -5, 2.8, 1, '#aa8800', '#ffe600'),
  'undo-view': at(0, 3, `<g transform="scale(.75)">${lens}</g>`) + fill('M-10-3L-5-8L-4-6Q3-10 9-4L7-2Q2-6-3-3L-2-1Z', '#333'),
  'four-view': rect(-10, -9, 20, 18, '#c2c4bd', '#111', 1.5) + line('M0-9V9M-10 0H10', 1.5),
  car: fill('M-9 1L-6-1L0-1L1-4H6L7-1H9V3H-9Z', '#e21b1b', '#811', .8) + dot(-5, 3, 1.8) + dot(5, 3, 1.8) + line('M-11 5H11', 1, '#aaa'),
  cplane: line('M-10 2L-3-6L10-2L4 8ZM-8 0L5 5M-6-2L8 2M-6 4L0-5M-1 6L4-4', .9, '#999') + line('M0 1L8 4', 1.2, RED) + line('M0 1L3-4', 1.2, '#282') + rect(-1, 0, 2.5, 2.5, '#fff', '#111'),
  'circle-tool': ring(0, 0, 8.5, 1.4, '#999') + line('M1 0H10', 1.2, '#222') + ring(0, 0, 1.5, 1, '#111', '#fff'),
  shapes: ring(-5, -3, 3, 1, '#970', '#ffe000') + rect(1, -4, 6, 6, '#ffe000', '#a70', 1.2) + fill('M-3 3L0 8H-6Z', '#fff', '#a53') + line('M6-10H10V-6M-11 7V10H-7', 1.2),
  bulb: fill('M-3 5Q-3 2-6-1Q-8-9 0-9.500Q8-9 6-1Q3 2 3 5Z', '#aaa', '#555', 1) + line('M-2.500 6.500H2.500M-2 9H2', 1.8, '#666') + dot(-2, -4, 2, '#eee'),
  box: rect(-4, -4, 10, 11, '#fff', '#111', 1.5),

  open: fill('M-7-1V-10H4L6-7V0Z', '#eee', '#666') + fill('M-9-1H-2L0-3H9V9H-9Z', '#8ed25c', '#2f7a17', 1.2),
  save: fill('M-10-10H10V10H-8L-10 8Z', '#2468e4', '#0a2f80', 1.2) + rect(-6, -9, 12, 9, '#e4e8ee') + rect(-5, 3, 9, 7, '#ccc', '#234') + rect(-3, 4, 3, 5, '#2468e4'),
  fit: rot(4, line('M-9-3V-9H-3', 3.2, '#222')) + ex(0, 0, 2, '#222'),
  eye: fill('M-10 0Q0-12 10 0Q0 11-10 0Z', '#fff', '#333', 1.4) + ring(0, 0, 5, 1, '#0a4a70', '#4db8ea') + dot(0, 0, 2.2) + dot(2, -2, 1, '#fff'),
  crayon: line('M-10 8Q-9 2-5 1Q-2 2-6 7Q-6 10 3 7', 1.4, '#822') + fill('M-2 6L-1-1L6-9L10-6L5 4Z', '#e12222', '#811', .8) + fill('M-2 6L-1-1L5 4Z', '#f8c98a', '#853', .8) + line('M2-2L8-7', 1.5, '#faa'),
  gha: line('M-7-4Q-5-9 2-8L4-6', 3, '#4a80cc') + fill('M2-11L8-6L2-4Z', '#4a80cc') + line('M7 5Q4 9-2 8', 3, '#c23a68') + fill('M-3 4V11L-8 7Z', '#c23a68') + '<text x="0" y="3" text-anchor="middle" font-family="Liberation Sans" font-size="8" font-weight="700" fill="#222">GHA</text>',
  window: rect(-10, -9, 20, 19, '#fff', '#111', 1) + rect(-10, -9, 6, 2, '#00a') + rect(7, -9, 3, 3, '#e00') + fill('M-2-4L7-1L4 7L-5 4Z', '#aaa', '#999') + line('M1 0V3H5', 1, '#2a6'),
  wires: ['M-10-8Q-3-8 0-4T10 0', 'M-10 0Q-3 0 0-4T10-8', 'M-10 8Q-3 8 0 4T10 0', 'M-10 0Q-3 0 0 4T10 8'].map(d => line(d, 3.4) + line(d, 1.2, '#fff')).join(''),
  pick: fill('M-9-7L5 0L0 2L5 8L2 10L-3 4L-6 7Z', '#9c2850', '#501', 1) + line('M0-9L9 0M9-10L1 0', 2, '#c22'),
  mouse: line('M-10-8H-6Q0-7-4 1T-10 9', 2.4, '#ff86b0') + line('M-3 9Q-4-7 8-8M5-10L9-8L5-5', 2, '#a52c58') + `<rect x="1" y="0" width="8" height="10" rx="4" fill="#fff" stroke="#a52c58" stroke-width="1.4"/>` + line('M1 4H9M5 0V4', 1.2, '#a52c58'),
  'wires-dash': line('M-10-9Q-3-9 0-5T10 0M10-9Q3-9 0-5T-10 0M-10 9Q-3 9 0 5T10 0M10 9Q3 9 0 5T-10 0', 1.8, '#b83a66', 'stroke-dasharray="4 2"'),
  refresh: ring(0, 0, 9.5, 1.8, '#c04070', '#ff8cb4') + line('M-5 0A5 5 0 1 1 0 5', 1.8, '#ffe3ee') + fill('M-8-1H-2L-5 3Z', '#ffe3ee'),
  palette: fill('M-7-9Q-2-10-1-6Q1-4 4-7Q10-9 10-2Q10 9 0 9Q-10 9-10-1Q-10-7-7-9Z', '#ddd', '#222', 1.5) + ring(-4, -3, 2.5, 1, '#501', '#b8325a') + ring(6, 0, 2.5, 1, '#024', '#3c6cc8') + ring(-1, 4, 2.5, 1, '#130', '#55b030'),

  nut: fill(poly(6, 10.5, 0), '#222', '#111', 1) + `<g transform="rotate(-45)"><ellipse rx="7.5" ry="5.5" fill="#444" stroke="#bbb" stroke-width="1.5"/><ellipse cx="1" rx="4.500" ry="3" fill="none" stroke="#ddd" stroke-width="1.3"/></g>`,
  dock: fill('M-1.500-8H1.500V-2H4L0 4L-4-2H-1.500Z') + line('M-9 5H9', 1.5) + line('M-8 8H9', 4, '#111', 'stroke-dasharray="1.500 2"'),
  scribble: line('M-9 5L-5 2L-7 8L1-4L-2 7L5-7L2 7L9-3', 2.2, '#a8660a'),
  close: fill(poly(6, 11, 0), '#222', '#111', 1) + line('M-3-3L3 3M3-3L-3 3', 2.5, '#fff')
};

function icon(name) {
  return `<svg viewBox="-11 -11 22 22" aria-hidden="true">${ICONS[name] || ''}</svg>`;
}
```
FILE: app.js
```js
// Fill in single icons
document.querySelectorAll('[data-icon]').forEach(function(el) {
  el.innerHTML = icon(el.dataset.icon);
});

// Number of columns for the ribbon panels, two rows each
document.querySelectorAll('[data-icons]').forEach(function(el) {
  const names = el.dataset.icons.split(' ');
  if (el.classList.contains('cells')) {
    el.style.gridTemplateColumns = 'repeat(' + Math.ceil(names.length / 2) + ', 28px)';
  }
  names.forEach(function(name) {
    const btn = document.createElement('button');
    if (name.endsWith('*')) {
      name = name.slice(0, -1);
      btn.className = 'more';
    }
    btn.setAttribute('aria-label', name);
    btn.innerHTML = icon(name);
    el.appendChild(btn);
  });
});

// Viewport grid, every fifth line is a major one
let minor = '', major = '';
for (let i = -60; i <= 60; i++) {
  const x = Math.round(323 + i * 8.97) + 0.5;
  const y = Math.round(421 + i * 8.97) + 0.5;
  const d = 'M' + x + ' 0V1200M0 ' + y + 'H1200';
  if (i % 5 === 0) major += d;
  else minor += d;
}
document.getElementById('grid').innerHTML = '<path class="minor" d="' + minor + '"/><path class="major" d="' + major + '"/>';

// Flowers grow with the distance to the curve
const curve = document.getElementById('curve');
const samples = [];
const total = curve.getTotalLength();
for (let l = 0; l <= total; l += 4) samples.push(curve.getPointAtLength(l));

let flowers = '';
for (let r = 0; r < 21; r++) {
  for (let c = 0; c < 11; c++) {
    const x = 188.7 + c * 26.9, y = 151.7 + r * 26.9;
    const dist = Math.min(...samples.map(p => Math.hypot(p.x - x, p.y - y)));
    const s = 0.2 + 1.8 * Math.min(1, dist / 135);
    flowers += '<g transform="translate(' + x.toFixed(1) + ' ' + y.toFixed(1) + ')">';
    flowers += '<circle r="' + (1.7 * s).toFixed(2) + '"/>';
    for (let a = 0; a < 360; a += 60) {
      flowers += '<ellipse transform="rotate(' + a + ')" cy="-6.5" rx="' + (0.9 * s).toFixed(2) + '" ry="' + (2.1 * s).toFixed(2) + '"/>';
    }
    flowers += '</g>';
  }
}
document.getElementById('flowers').innerHTML = flowers;

// Canvas grid
let lines = '';
for (let i = 0; i < 20; i++) {
  lines += 'M' + (Math.round(87 + i * 127.5) + 0.5) + ' 0V1200';
  lines += 'M0 ' + (Math.round(50 + i * 42.5) + 0.5) + 'H3000';
}
document.getElementById('canvas-grid').innerHTML = '<path class="canvas-line" d="' + lines + '"/>';
```
